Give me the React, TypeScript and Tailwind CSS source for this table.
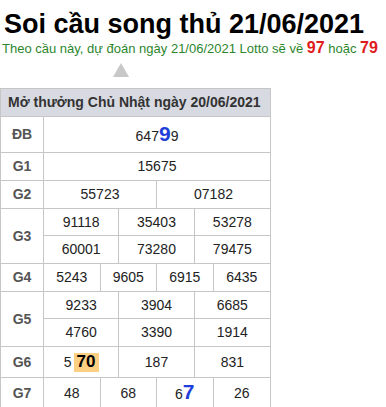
import React from "react";

type Cell = React.ReactNode;

const colClass: Record<number, string> = {
  1: "grid-cols-1",
  2: "grid-cols-2",
  3: "grid-cols-3",
  4: "grid-cols-4",
};

const Line = ({ cells, h = "h-[27px]" }: { cells: Cell[]; h?: string }) => (
  <div className={`grid ${colClass[cells.length]} divide-x divide-[#c6c6c6] ${h}`}>
    {cells.map((c, i) => (
      <div key={i} className="flex items-center justify-center text-[14px] text-[#222]">
        {c}
      </div>
    ))}
  </div>
);

const Row = ({
  label,
  lines,
  h,
}: {
  label: string;
  lines: Cell[][];
  h?: string;
}) => (
  <div className="flex border-t border-[#c6c6c6]">
    <div className="w-[43px] shrink-0 border-r border-[#c6c6c6] flex items-center justify-center text-[14px] font-bold text-[#555]">
      {label}
    </div>
    <div className="flex-1 flex flex-col divide-y divide-[#c6c6c6]">
      {lines.map((l, i) => (
        <Line key={i} cells={l} h={h} />
      ))}
    </div>
  </div>
);

const Blue = ({ children }: { children: React.ReactNode }) => (
  <span className="text-[21px] leading-none font-bold text-[#1e3fd8]">{children}</span>
);

export default function App() {
  return (
    <div className="w-[386px] h-[407px] overflow-hidden bg-white font-['Arial','Liberation_Sans',sans-serif]">
      <h1 className="pl-[4px] pt-[8px] text-[27px] leading-[32px] font-bold text-black">
        Soi cầu song thủ 21/06/2021
      </h1>
      <p className="pl-[2px] text-[13px] leading-[18px] text-[#2d862d] whitespace-nowrap">
        Theo cầu này, dự đoán ngày 21/06/2021 Lotto sẽ về{" "}
        <span className="text-[16px] leading-none font-bold text-[#e01b1b]">97</span> hoặc{" "}
        <span className="text-[16px] leading-none font-bold text-[#e01b1b]">79</span>
      </p>
      <svg width="16" height="14" viewBox="0 0 16 14" className="ml-[113px] mt-[5px] block">
        <polygon points="8,0 16,14 0,14" fill="#c8c8c8" />
      </svg>
      <div className="mt-[11px] w-[271px] border border-[#c6c6c6]">
        <div className="h-[27px] bg-[#d8dae2] flex items-center pl-[7px] text-[14px] font-bold text-[#333]">
          Mở thưởng Chủ Nhật ngày 20/06/2021
        </div>
        <Row
          label="ĐB"
          h="h-[35px]"
          lines={[
            [
              <span>
                647<Blue>9</Blue>9
              </span>,
            ],
          ]}
        />
        <Row label="G1" lines={[["15675"]]} />
        <Row label="G2" lines={[["55723", "07182"]]} />
        <Row
          label="G3"
          lines={[
            ["91118", "35403", "53278"],
            ["60001", "73280", "79475"],
          ]}
        />
        <Row label="G4" lines={[["5243", "9605", "6915", "6435"]]} />
        <Row
          label="G5"
          lines={[
            ["9233", "3904", "6685"],
            ["4760", "3390", "1914"],
          ]}
        />
        <Row
          label="G6"
          h="h-[30px]"
          lines={[
            [
              <span className="flex items-center">
                5
                <span className="ml-[2px] bg-[#fccf82] px-[3px] h-[19px] flex items-center text-[17px] font-bold text-black">
                  70
                </span>
              </span>,
              "187",
              "831",
            ],
          ]}
        />
        <Row
          label="G7"
          h="h-[30px]"
          lines={[
            [
              "48",
              "68",
              <span>
                6<Blue>7</Blue>
              </span>,
              "26",
            ],
          ]}
        />
      </div>
    </div>
  );
}
